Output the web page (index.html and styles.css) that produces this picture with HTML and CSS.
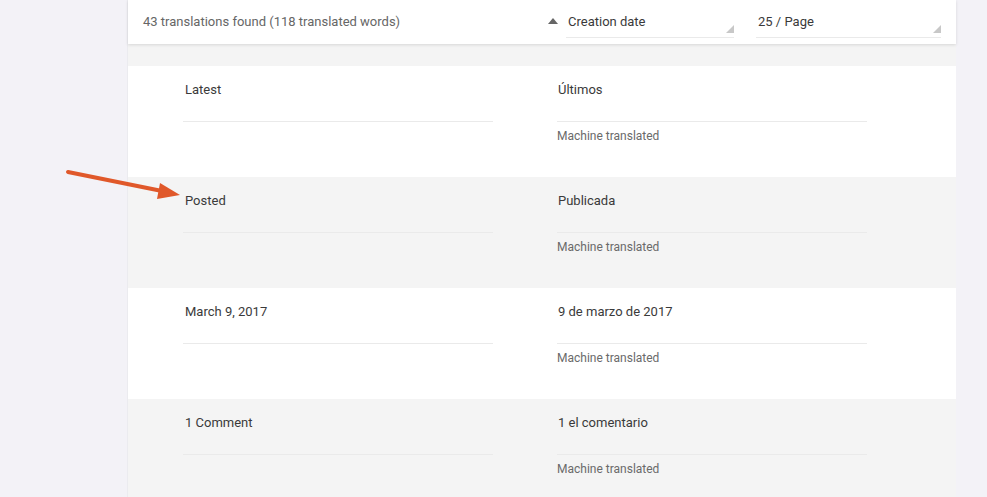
FILE: index.html
```html
<!DOCTYPE html>
<html>
<head>
<meta charset="utf-8">
<link rel="stylesheet" href="styles.css">
</head>
<body>
<div class="page">
  <div class="panel">
    <div class="toolbar">
      <div class="count">43 translations found (118 translated words)</div>
      <div class="sort">
        <span class="sort-arrow"></span>
        <div class="select sel-date"><span>Creation date</span><i class="grip"></i></div>
      </div>
      <div class="select sel-page"><span>25 / Page</span><i class="grip"></i></div>
    </div>
    <div class="spacer"></div>
    <div class="row">
      <div class="cell src"><div class="field">Latest</div></div>
      <div class="cell dst"><div class="field">Últimos</div><div class="note">Machine translated</div></div>
    </div>
    <div class="row alt">
      <div class="cell src"><div class="field">Posted</div></div>
      <div class="cell dst"><div class="field">Publicada</div><div class="note">Machine translated</div></div>
    </div>
    <div class="row">
      <div class="cell src"><div class="field">March 9, 2017</div></div>
      <div class="cell dst"><div class="field">9 de marzo de 2017</div><div class="note">Machine translated</div></div>
    </div>
    <div class="row alt">
      <div class="cell src"><div class="field">1 Comment</div></div>
      <div class="cell dst"><div class="field">1 el comentario</div><div class="note">Machine translated</div></div>
    </div>
  </div>
</div>
<svg class="pointer" width="200" height="60" viewBox="0 0 200 60">
  <line x1="68" y1="12" x2="162" y2="31" stroke="#e0582a" stroke-width="4" stroke-linecap="round"/>
  <polygon points="160,23 180,35 157,39" fill="#e0582a"/>
</svg>
</body>
</html>
```
FILE: styles.css
```css
html, body {
  margin: 0;
  padding: 0;
}
body {
  background: #f3f2f7;
  font-family: Roboto, "Liberation Sans", sans-serif;
  color: #3a3a3a;
  width: 987px;
  height: 497px;
  overflow: hidden;
  position: relative;
}
.page {
  padding-left: 128px;
  width: 828px;
}
.panel {
  background: #f4f4f4;
  border-left: 1px solid #ebebef;
  margin-left: -1px;
}
.toolbar {
  height: 44px;
  background: #fff;
  box-shadow: 0 1px 3px rgba(0,0,0,0.12);
  display: flex;
  align-items: flex-start;
  position: relative;
  z-index: 1;
}
.count {
  font-size: 13px;
  color: #666;
  margin-left: 15px;
  margin-top: 14px;
  line-height: 16px;
  width: 405px;
}
.sort {
  display: flex;
  align-items: flex-start;
}
.sort-arrow {
  width: 0;
  height: 0;
  border-left: 5px solid transparent;
  border-right: 5px solid transparent;
  border-bottom: 6px solid #666;
  margin-top: 18px;
  margin-right: 8px;
}
.select {
  position: relative;
  height: 38px;
  border-bottom: 1px solid #eaeaea;
  font-size: 13px;
  line-height: 16px;
  color: #3a3a3a;
  box-sizing: border-box;
}
.select span {
  display: block;
  padding: 14px 0 0 2px;
}
.sel-date {
  width: 168px;
}
.sel-page {
  width: 185px;
  margin-left: 22px;
}
.grip {
  position: absolute;
  right: 0;
  bottom: 4px;
  width: 0;
  height: 0;
  border-left: 8px solid transparent;
  border-bottom: 8px solid #c8c8c8;
}
.spacer {
  height: 22px;
}
.row {
  height: 111px;
  background: #fff;
  display: flex;
  box-sizing: border-box;
  padding-left: 55px;
}
.row.alt {
  background: #f4f4f4;
}
.cell {
  width: 310px;
}
.cell.dst {
  margin-left: 64px;
}
.field {
  margin-top: 15px;
  padding-top: 1px;
  height: 39px;
  border-bottom: 1px solid #eaeaea;
  font-size: 13px;
  line-height: 16px;
  color: #3a3a3a;
  padding-left: 2px;
}
.dst .field {
  padding-left: 1px;
}
.note {
  margin-top: 7px;
  font-size: 12px;
  line-height: 14px;
  color: #6a6a6a;
}
.pointer {
  position: absolute;
  left: 0;
  top: 160px;
}
```
